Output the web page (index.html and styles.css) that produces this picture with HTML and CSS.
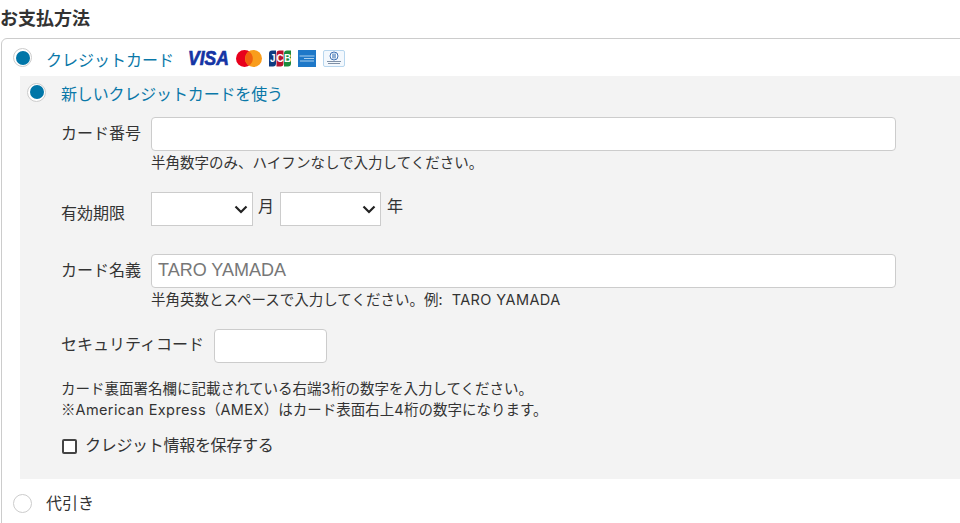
FILE: index.html
```html
<!DOCTYPE html>
<html lang="ja">
<head>
<meta charset="utf-8">
<title>お支払方法</title>
<link rel="stylesheet" href="styles.css">
</head>
<body>
<main class="page">
  <h2 class="title">お支払方法</h2>
  <section class="box">
    <div class="method active">
      <span class="radio on"></span>
      <span class="method-label">クレジットカード</span>
      <span class="brands">
        <svg class="brand visa" width="42" height="24" viewBox="0 0 42 24"><text x="0" y="16" transform="scale(1 1.17)" class="visa-text">VISA</text></svg>
        <svg class="brand mc" width="26" height="17" viewBox="0 0 26 17"><circle cx="8.500" cy="8.500" r="8.500" fill="#e8001c"/><circle cx="17.500" cy="8.500" r="8.500" fill="#f99d1c"/><path d="M13 1.400a8.500 8.500 0 0 1 0 14.200 8.500 8.500 0 0 1 0-14.200z" fill="#f0600f"/></svg>
        <svg class="brand jcb" width="22" height="17" viewBox="0 0 22 17"><path d="M0 3.500a3 3 0 0 1 3-3h4v13a3 3 0 0 1-3 3H0z" fill="#0f3a80"/><path d="M7.500 3.500a3 3 0 0 1 3-3h4v13a3 3 0 0 1-3 3h-4z" fill="#b8132e"/><path d="M15 3.500a3 3 0 0 1 3-3h4v13a3 3 0 0 1-3 3h-4z" fill="#1c8b3c"/><text x="3.800" y="12" class="jcb-text">J</text><text x="11" y="12" class="jcb-text">C</text><text x="18.500" y="12" class="jcb-text">B</text></svg>
        <svg class="brand amex" width="18" height="17" viewBox="0 0 18 17"><rect width="18" height="17" fill="#1e78c8"/><path d="M1.500 6h15M6 8.500h10M2 11h14" stroke="#a9d0ef" stroke-width="1"/></svg>
        <svg class="brand" width="22" height="17" viewBox="0 0 22 17"><rect x=".5" y=".5" width="21" height="16" rx="1.500" fill="#f3f8fd" stroke="#b8d6ee"/><circle cx="11" cy="6" r="4" fill="#fff" stroke="#3f72b5"/><path d="M10 3.500v5M12 3.500v5" stroke="#1f5fa8" stroke-width="1"/><path d="M4 11.500h14M5 13.500h12" stroke="#7f90a6" stroke-width="1"/></svg>
      </span>
    </div>
    <div class="panel">
      <div class="sub-method">
        <span class="radio on"></span>
        <span class="method-label">新しいクレジットカードを使う</span>
      </div>
      <div class="field field-number">
        <label class="field-label">カード番号</label>
        <div class="field-body">
          <input class="input input-wide" type="text">
          <p class="help">半角数字のみ、ハイフンなしで入力してください。</p>
        </div>
      </div>
      <div class="field field-expiry">
        <label class="field-label expiry-label">有効期限</label>
        <div class="expiry">
          <span class="select select-month"><svg width="14" height="9" viewBox="0 0 14 9"><path d="M1.500 1.500L7 7l5.500-5.500" fill="none" stroke="#222" stroke-width="2.200"/></svg></span>
          <span class="unit">月</span>
          <span class="select select-year"><svg width="14" height="9" viewBox="0 0 14 9"><path d="M1.500 1.500L7 7l5.500-5.500" fill="none" stroke="#222" stroke-width="2.200"/></svg></span>
          <span class="unit">年</span>
        </div>
      </div>
      <div class="field field-name">
        <label class="field-label">カード名義</label>
        <div class="field-body">
          <input class="input input-wide input-name" type="text" placeholder="TARO YAMADA">
          <p class="help">半角英数とスペースで入力してください。例: <span class="latin example">TARO YAMADA</span></p>
        </div>
      </div>
      <div class="field field-code">
        <label class="field-label code-label">セキュリティコード</label>
        <input class="input input-code" type="text">
      </div>
      <p class="note">カード裏面署名欄に記載されている右端<span class="latin">3</span>桁の数字を入力してください。<br>※<span class="latin">American Express</span>（<span class="latin">AMEX</span>）はカード表面右上<span class="latin">4</span>桁の数字になります。</p>
      <div class="save">
        <span class="checkbox"></span>
        <span class="save-label">クレジット情報を保存する</span>
      </div>
    </div>
    <div class="method">
      <span class="radio"></span>
      <span class="method-label plain">代引き</span>
    </div>
  </section>
</main>
</body>
</html>
```
FILE: styles.css
```css
* { box-sizing: border-box; }
html, body { margin: 0; padding: 0; background: #fff; overflow: hidden; height: 100%; }
body { font-family: "Noto Sans CJK JP", "Noto Sans", sans-serif; color: #333; font-size: 16px; text-spacing-trim: space-all; }
.page { width: 1000px; padding-left: 1px; height: 523px; overflow: hidden; }
.title { margin: 0 0 0 -1px; height: 38px; font-size: 18px; font-weight: 700; line-height: 34px; color: #333; }
.box { border: 1px solid #ccc; border-radius: 6px 0 0 0; height: 600px; padding-left: 18px; }
.method { display: flex; align-items: center; height: 37px; margin-left: -18px; padding-left: 11px; }
.method + .panel + .method { height: 48px; }
.radio { width: 19px; height: 19px; border-radius: 50%; border: 1px solid #ccc; background: #fff; flex: none; display: flex; align-items: center; justify-content: center; }
.radio.on::after { content: ""; width: 14px; height: 14px; border-radius: 50%; background: #0076a8; }
.method-label { margin-left: 14px; padding-top: 2px; color: #0a78a8; line-height: 24px; white-space: nowrap; }
.method-label.plain { color: #333; padding-top: 0; margin-top: -2px; }
.brands { display: flex; align-items: center; margin-left: 14px; gap: 7px; margin-top: 1px; }
.brand { display: block; flex: none; }
.visa { margin: -4px -1px -4px 0; }
.visa-text { font-family: "Liberation Sans", sans-serif; font-weight: 700; font-style: italic; font-size: 17.500px; fill: #1434a4; stroke: #1434a4; stroke-width: .6px; }
.jcb-text { font-family: "Liberation Sans", sans-serif; font-weight: 700; font-size: 10px; fill: #fff; text-anchor: middle; }
.panel { background: #f3f3f3; height: 403px; width: 960px; padding-left: 7px; display: flow-root; }
.sub-method { display: flex; align-items: center; height: 32px; }
.sub-method .method-label { margin-left: 15px; letter-spacing: -.15px; }
.field { display: flex; margin-left: 34px; }
.field-label { width: 90px; flex: none; line-height: 24px; white-space: nowrap; }
.field-number { margin-top: 9px; }
.field-number .field-label { margin-top: 3px; }
.field-body { display: flex; flex-direction: column; }
.input { display: block; height: 34px; background: #fff; border: 1px solid #ccc; border-radius: 4px; outline: 0; padding: 0 6px; font: inherit; }
.input-wide { width: 745px; }
.input-name { font-family: "Liberation Sans", sans-serif; font-size: 18px; padding-bottom: 2px; }
.input-name::placeholder { color: #777; opacity: 1; }
.help { margin: 0; font-size: 14.500px; line-height: 22px; color: #333; white-space: nowrap; }
.latin { font-family: Inter, sans-serif; letter-spacing: .4px; }
.example { margin-left: 6px; }
.field-expiry { margin-top: 19px; }
.expiry-label { margin-top: 8px; }
.expiry { display: flex; align-items: flex-start; }
.select { height: 34px; background: #fff; border: 1px solid #ccc; display: flex; align-items: center; justify-content: flex-end; padding-right: 4px; }
.select-month { width: 102px; }
.select-year { width: 101px; }
.unit { margin: 1px 5px 0 5px; line-height: 24px; width: 17px; }
.unit:last-child { margin-left: 6px; }
.field-name { margin-top: 28px; }
.field-name .field-label { margin-top: 3px; }
.field-code { margin-top: 18px; }
.code-label { width: 153px; margin-top: 2px; }
.input-code { width: 113px; }
.note { margin: 15px 0 0 34px; font-size: 14.500px; line-height: 20px; white-space: nowrap; }
.save { display: flex; align-items: center; margin: 14px 0 0 35px; height: 24px; }
.checkbox { width: 15px; height: 15px; border: 2px solid #444; border-radius: 2px; background: #fff; flex: none; }
.save-label { margin-left: 8px; line-height: 24px; margin-top: -4px; letter-spacing: -.3px; }
```
